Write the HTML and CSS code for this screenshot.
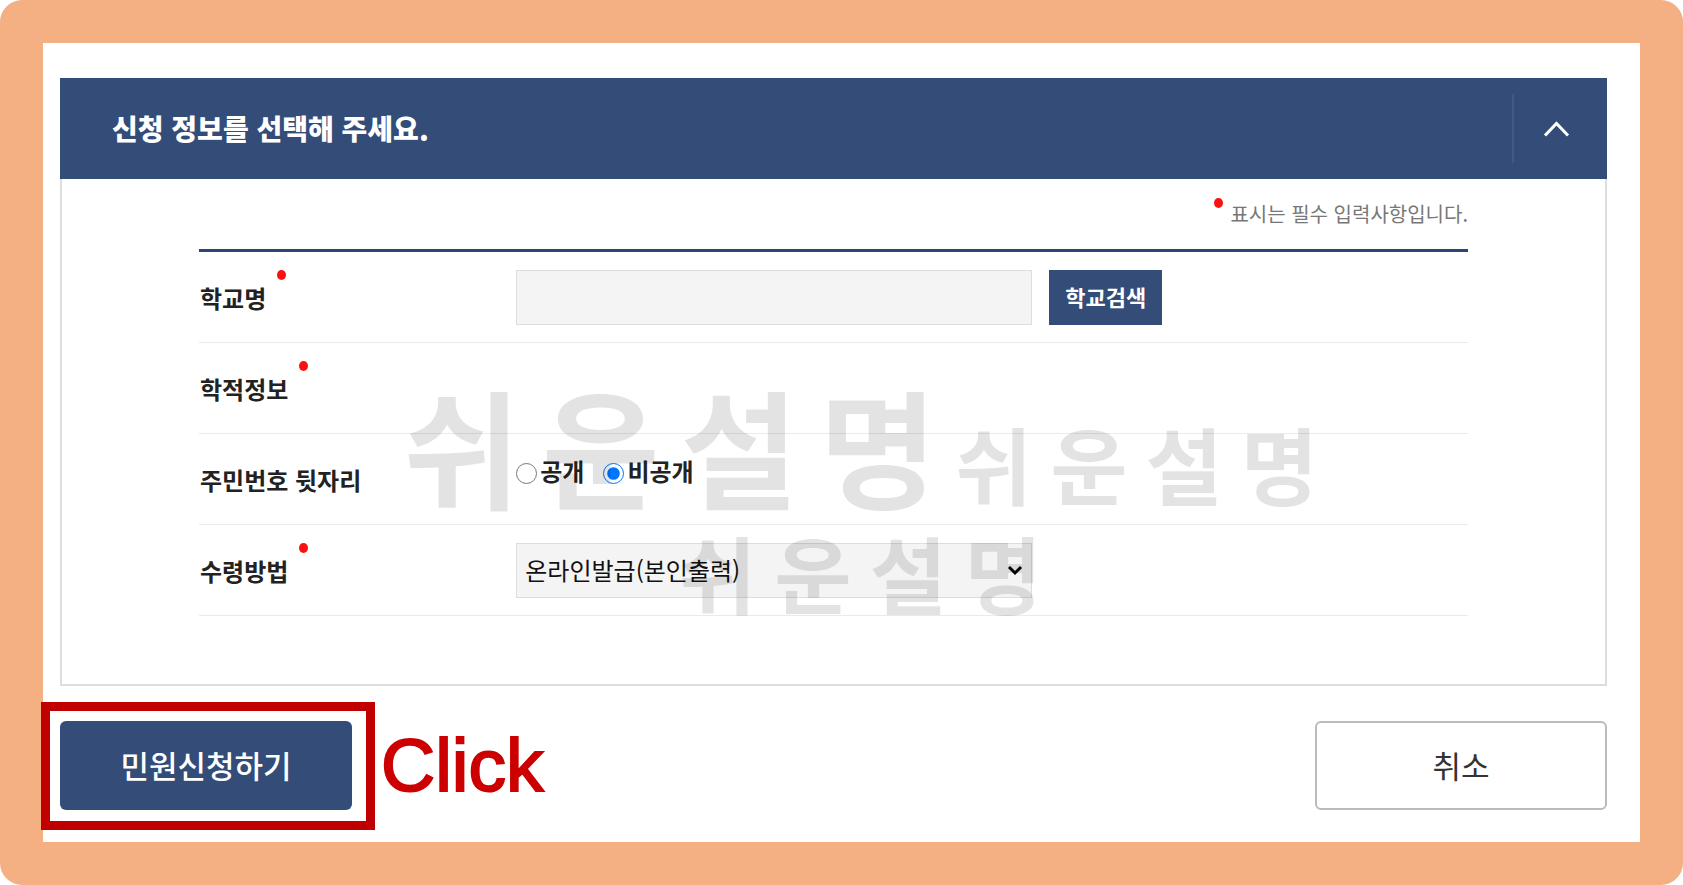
FILE: index.html
```html
<!DOCTYPE html>
<html lang="ko">
<head>
    <meta charset="UTF-8">
    <meta name="viewport" content="width=device-width, initial-scale=1.0">
    <title>신청 정보 선택</title>
    <link rel="stylesheet" href="styles.css">
</head>
<body>

<form class="page">
    <section class="panel">
        <div class="panel-header">
            <h2>신청 정보를 선택해 주세요.</h2>
            <button type="button" class="btn-toggle" aria-label="접기">
                <svg width="27" height="16" viewBox="0 0 27 16">
                    <path d="M2 14.5 L13.5 2.5 L25 14.5" fill="none" stroke="#fff" stroke-width="3"/>
                </svg>
            </button>
        </div>

        <div class="panel-body">
            <p class="note"><span class="note-text">표시는 필수 입력사항입니다.</span></p>

            <table class="form-table">
                <tr>
                    <th scope="row"><label for="schoolName" class="required">학교명</label></th>
                    <td>
                        <div class="field">
                            <input type="text" id="schoolName" class="text-input" readonly>
                            <button type="button" class="btn-search">학교검색</button>
                        </div>
                    </td>
                </tr>
                <tr>
                    <th scope="row"><span class="required">학적정보</span></th>
                    <td></td>
                </tr>
                <tr>
                    <th scope="row">주민번호 뒷자리</th>
                    <td>
                        <div class="radio-group">
                            <input type="radio" id="open" name="idOpen">
                            <label for="open">공개</label>
                            <input type="radio" id="closed" name="idOpen" checked>
                            <label for="closed">비공개</label>
                        </div>
                    </td>
                </tr>
                <tr>
                    <th scope="row"><label for="receive" class="required">수령방법</label></th>
                    <td>
                        <div class="select-box">
                            <select id="receive">
                                <option>온라인발급(본인출력)</option>
                            </select>
                            <svg class="select-arrow" width="16" height="11" viewBox="0 0 16 11">
                                <path d="M2 2 L8 8 L14 2" fill="none" stroke="#000" stroke-width="3"/>
                            </svg>
                        </div>
                    </td>
                </tr>
            </table>
        </div>

        <span class="watermark watermark-big">쉬운설명</span>
        <span class="watermark watermark-right">쉬운설명</span>
        <span class="watermark watermark-bottom">쉬운설명</span>
    </section>

    <div class="actions">
        <div class="highlight">
            <button type="submit" class="btn btn-submit">민원신청하기</button>
        </div>
        <span class="click-text">Click</span>
        <button type="button" class="btn btn-cancel">취소</button>
    </div>
</form>

</body>
</html>
```

FILE: styles.css
```css
* {
    box-sizing: border-box;
}
body {
    margin: 0;
    background-color: #fff;
    color: #222;
    font-family: "Noto Sans CJK KR", sans-serif;
    font-size: 24px;
}
button, input, select {
    font-family: inherit;
}
.page {
    min-height: 100vh;
    padding: 35px 33px 32px 17px;
    border: 43px solid #f4b083;
    border-radius: 22px;
}
.panel {
    position: relative;
}
.panel-header {
    display: flex;
    align-items: center;
    justify-content: space-between;
    height: 101px;
    padding-left: 52px;
    background-color: #334c78;
    color: #fff;
}
.panel-header h2 {
    margin: 0;
    padding-bottom: 2px;
    font-size: 28px;
    font-weight: 900;
}
.btn-toggle {
    display: flex;
    align-items: center;
    justify-content: center;
    width: 95px;
    height: 69px;
    padding: 0 8px 0 0;
    background: none;
    border: none;
    border-left: 2px solid #415983;
    cursor: pointer;
}
.panel-body {
    padding: 0 137px 68px;
    border: 2px solid #ddd;
    border-top: none;
}
.note {
    margin: 0;
    height: 70px;
    line-height: 70px;
    text-align: right;
    font-size: 20px;
    color: #777;
}
.note-text,
.required {
    position: relative;
}
.note-text::before,
.required::after {
    content: "";
    position: absolute;
    width: 9px;
    height: 10px;
    border-radius: 50%;
    background-color: #fb1010;
}
.note-text::before {
    top: -1px;
    left: -16px;
}
.required::after {
    top: -10px;
    right: -20px;
}
.required {
    display: inline-block;
    line-height: 36px;
}
.form-table {
    width: 100%;
    border-spacing: 0;
    border-top: 3px solid #2c4674;
    table-layout: fixed;
}
.form-table th,
.form-table td {
    height: 91px;
    padding: 0;
    border-bottom: 1px solid #eaeaea;
    vertical-align: middle;
}
.form-table th {
    width: 25%;
    padding: 1px 0 0 1px;
    text-align: left;
    font-weight: 700;
}
.field {
    display: flex;
    align-items: center;
    gap: 17px;
}
.text-input {
    width: 516px;
    height: 55px;
    padding: 0 8px;
    border: 1px solid #ddd;
    background-color: #f4f4f4;
    font-size: 22px;
}
.btn-search {
    width: 113px;
    height: 55px;
    padding: 0 0 3px;
    border: none;
    background-color: #334c78;
    color: #fff;
    font-size: 22px;
    font-weight: 700;
    cursor: pointer;
}
.radio-group {
    display: flex;
    align-items: center;
    padding-bottom: 17px;
    font-weight: 700;
}
.radio-group input {
    width: 21px;
    height: 21px;
    margin: 6px 3px 0 0;
}
.radio-group label {
    margin-right: 19px;
}
.select-box {
    position: relative;
    width: 516px;
}
.select-box select {
    display: block;
    width: 100%;
    height: 55px;
    padding: 0 40px 2px 8px;
    border: 1px solid #ddd;
    border-radius: 0;
    background-color: #f4f4f4;
    color: #111;
    font-size: 24px;
    appearance: none;
}
.select-arrow {
    position: absolute;
    top: 22px;
    right: 9px;
    pointer-events: none;
}
.watermark {
    position: absolute;
    color: rgba(0, 0, 0, 0.11);
    font-weight: 700;
    font-size: 84px;
    line-height: 100px;
    letter-spacing: 18px;
    white-space: nowrap;
    pointer-events: none;
}
.watermark-big {
    top: 297px;
    left: 343px;
    font-size: 128px;
    line-height: 140px;
    letter-spacing: 21px;
}
.watermark-right {
    top: 335px;
    left: 895px;
}
.watermark-bottom {
    top: 444px;
    left: 619px;
}
.actions {
    display: flex;
    align-items: center;
    margin-top: 35px;
    height: 89px;
}
.highlight {
    position: relative;
}
.highlight::after {
    content: "";
    position: absolute;
    inset: -19px -23px -20px -19px;
    border: 9px solid #c00000;
    pointer-events: none;
}
.btn {
    display: block;
    width: 292px;
    height: 89px;
    padding-bottom: 4px;
    border-radius: 6px;
    font-size: 31px;
    font-weight: 500;
    cursor: pointer;
}
.btn-submit {
    border: none;
    background-color: #334c78;
    color: #fff;
}
.btn-cancel {
    margin-left: auto;
    border: 2px solid #bbb;
    background-color: #fff;
    color: #333;
    font-weight: 400;
}
.click-text {
    margin-left: 29px;
    color: #cc0000;
    font-family: "Liberation Sans", Arial, sans-serif;
    font-size: 75px;
    line-height: 89px;
    -webkit-text-stroke: 2px #cc0000;
}
```
